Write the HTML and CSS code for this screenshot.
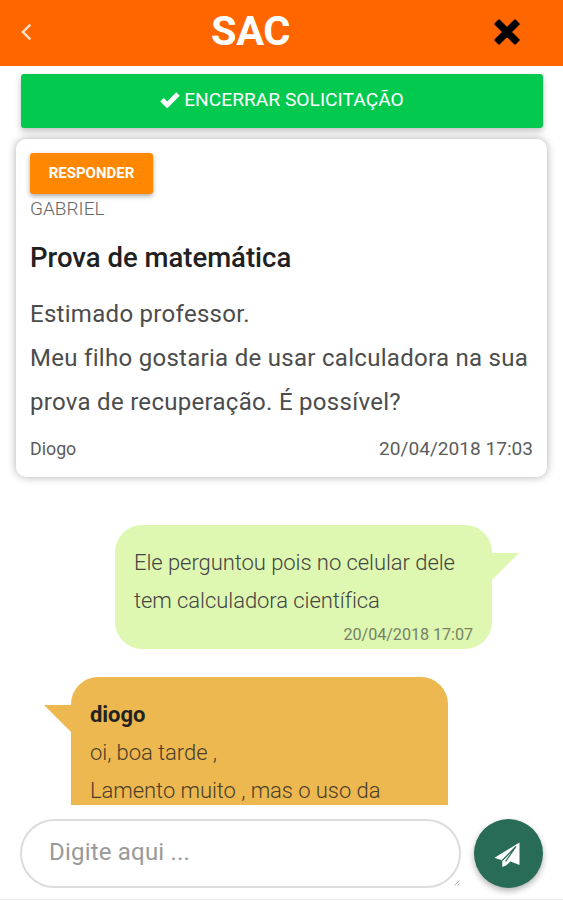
FILE: index.html
```html
<!DOCTYPE html>
<html lang="pt-BR">
<head>
    <meta charset="UTF-8">
    <meta name="viewport" content="width=device-width, initial-scale=1.0">
    <title>SAC</title>
    <link rel="stylesheet" href="styles.css">
</head>
<body>

    <header class="topo">
        <button class="botao-topo voltar" aria-label="Voltar">
            <svg width="12" height="18" viewBox="0 0 12 18"><path d="M10.4 1.6 L2.8 9 L10.4 16.4" fill="none" stroke="#ffe0cc" stroke-width="2.4"/></svg>
        </button>
        <h1 class="titulo">SAC</h1>
        <button class="botao-topo fechar" aria-label="Fechar">
            <svg width="28" height="28" viewBox="0 0 28 28"><path d="M6 2.5 L14 10.5 L22 2.5 L25.5 6 L17.5 14 L25.5 22 L22 25.5 L14 17.5 L6 25.5 L2.5 22 L10.5 14 L2.5 6 Z" fill="#000" stroke="#000" stroke-width="2.4" stroke-linejoin="round"/></svg>
        </button>
    </header>

    <main class="conteudo">
        <button class="encerrar">
            <svg width="20" height="17" viewBox="0 0 20 17"><path d="M2 8.8 L7.2 14 L18 3" fill="none" stroke="#fff" stroke-width="4.8"/></svg>
            <span>ENCERRAR SOLICITAÇÃO</span>
        </button>

        <section class="cartao">
            <button class="responder">RESPONDER</button>
            <p class="aluno">GABRIEL</p>
            <h2 class="assunto">Prova de matemática</h2>
            <p class="texto">Estimado professor.<br>Meu filho gostaria de usar calculadora na sua<br>prova de recuperação. É possível?</p>
            <div class="rodape-cartao">
                <span class="autor">Diogo</span>
                <span class="data">20/04/2018 17:03</span>
            </div>
        </section>

        <div class="balao enviado">
            <p>Ele perguntou pois no celular dele<br>tem calculadora científica</p>
            <span class="hora">20/04/2018 17:07</span>
        </div>

        <div class="balao recebido">
            <strong class="nome">diogo</strong>
            <p>oi, boa tarde ,<br>Lamento muito , mas o uso da</p>
        </div>
    </main>

    <footer class="barra-envio">
        <div class="campo">
            <textarea class="mensagem" rows="1" placeholder="Digite aqui ..."></textarea>
            <svg class="alca" width="6" height="6" viewBox="0 0 6 6"><path d="M0.5 5.5 L5.5 0.5 M3.5 5.5 L5.5 3.5" stroke="#aaa" stroke-width="0.9"/></svg>
        </div>
        <button class="enviar" aria-label="Enviar">
            <svg width="26" height="26" viewBox="0 0 26 26"><path d="M25.5 1.5 V24 L16.5 20.5 L12 24.5 L8.3 26 V19.5 L0.5 16.8 Z" fill="#fff"/><path d="M8.3 19.5 L22 5.5 L11.5 20.5" fill="none" stroke="#286b56" stroke-width="1.2"/></svg>
        </button>
    </footer>

</body>
</html>
```
FILE: styles.css
```css
/* --- Cores --- */
:root {
    --laranja: #ff6600;
    --verde: #03c94f;
    --verde-claro: #def7b1;
    --amarelo: #edb850;
    --verde-escuro: #286b56;
}

* {
    margin: 0;
    padding: 0;
    box-sizing: border-box;
}

body {
    font-family: Roboto, "Liberation Sans", sans-serif;
    background-color: #fff;
    color: #212121;
    height: 900px;
    display: flex;
    flex-direction: column;
    overflow: hidden;
    border-bottom: 1px solid #e8e8e8;
}

button {
    font-family: inherit;
    border: none;
    cursor: pointer;
}

svg {
    display: block;
}

/* --- Topo --- */
.topo {
    height: 66px;
    flex: none;
    background-color: var(--laranja);
    display: flex;
    align-items: center;
    justify-content: space-between;
    padding: 0 42px 0 20px;
}

.botao-topo {
    background: none;
}

.voltar,
.fechar {
    margin-top: -2px;
}

.titulo {
    font-size: 41.5px;
    font-weight: 700;
    line-height: 60px;
    letter-spacing: -0.4px;
    color: #fff;
    margin: -4px 24px 0 0;
}

/* --- Conteúdo com rolagem --- */
.conteudo {
    flex: none;
    height: 739px;
    padding: 8px 15px 0 16px;
    overflow: hidden;
}

.encerrar {
    width: 522px;
    height: 54px;
    margin-left: 5px;
    display: flex;
    align-items: center;
    justify-content: center;
    gap: 4px;
    background-color: var(--verde);
    color: #fff;
    border-radius: 3px;
    font-size: 19.2px;
    padding-bottom: 3px;
    box-shadow: 0 3px 6px rgba(0, 0, 0, 0.25);
}

/* --- Cartão da solicitação --- */
.cartao {
    position: relative;
    width: 531px;
    height: 338px;
    margin-top: 11px;
    padding: 14px 14px 0;
    background-color: #fff;
    border-radius: 10px;
    box-shadow: 0 0 8px rgba(0, 0, 0, 0.32);
}

.responder {
    display: block;
    width: 123px;
    height: 41px;
    background-color: #ff8800;
    color: #fff;
    border-radius: 3px;
    font-size: 15px;
    font-weight: 700;
    padding-bottom: 2px;
    box-shadow: 0 2px 5px rgba(0, 0, 0, 0.35);
}

.aluno {
    font-size: 19px;
    font-weight: 300;
    line-height: 28px;
    color: #666;
    margin-top: 1px;
}

.assunto {
    font-size: 27.5px;
    font-weight: 500;
    line-height: 36px;
    margin-top: 17px;
}

.texto {
    font-size: 24px;
    line-height: 44px;
    letter-spacing: 0.29px;
    color: #4c4c4c;
    margin-top: 16px;
    white-space: nowrap;
}

.rodape-cartao {
    display: flex;
    justify-content: space-between;
    align-items: center;
    line-height: 26px;
    margin-top: 12px;
    color: #5c5c5c;
}

.autor {
    font-size: 17.8px;
}

.data {
    font-size: 19.1px;
}

/* --- Balões da conversa --- */
.balao {
    position: relative;
    width: 377px;
    font-size: 22px;
    font-weight: 300;
    line-height: 38px;
    letter-spacing: -0.06px;
    color: #444;
    white-space: nowrap;
}

.balao::after {
    content: "";
    position: absolute;
    top: 28px;
    width: 27px;
    height: 27px;
}

.enviado {
    height: 124px;
    margin: 48px 0 0 99px;
    padding: 19px 19px 0;
    background-color: var(--verde-claro);
    border-radius: 27px;
}

.enviado::after {
    left: 100%;
    background-color: var(--verde-claro);
    clip-path: polygon(0 0, 100% 0, 0 100%);
}

.hora {
    display: block;
    font-size: 16.2px;
    font-weight: 400;
    line-height: 24px;
    color: #758264;
    text-align: right;
    margin-top: 3px;
}

.recebido {
    height: 180px;
    margin: 28px 0 0 55px;
    padding: 19px 19px 0;
    background-color: var(--amarelo);
    border-radius: 27px;
    color: #4a3e28;
}

.recebido::after {
    right: 100%;
    background-color: var(--amarelo);
    clip-path: polygon(0 0, 100% 0, 100% 100%);
}

.nome {
    display: block;
    font-weight: 700;
    color: #222;
}

/* --- Barra de envio --- */
.barra-envio {
    display: flex;
    gap: 13px;
    padding: 14px 20px 0;
}

.campo {
    position: relative;
    width: 441px;
    height: 69px;
}

.mensagem {
    display: block;
    width: 100%;
    height: 100%;
    border: 2px solid #dcdcdc;
    border-radius: 35px;
    padding: 17px 27px;
    font-family: inherit;
    font-size: 24px;
    line-height: 28px;
    letter-spacing: 0.2px;
    resize: none;
    overflow: hidden;
}

.mensagem::placeholder {
    color: #999;
}

.alca {
    position: absolute;
    right: 1px;
    bottom: 2px;
}

.enviar {
    width: 69px;
    height: 69px;
    border-radius: 50%;
    background-color: var(--verde-escuro);
    display: flex;
    align-items: center;
    justify-content: center;
    padding-right: 4px;
    box-shadow: 0 3px 6px rgba(0, 0, 0, 0.3);
}
```
